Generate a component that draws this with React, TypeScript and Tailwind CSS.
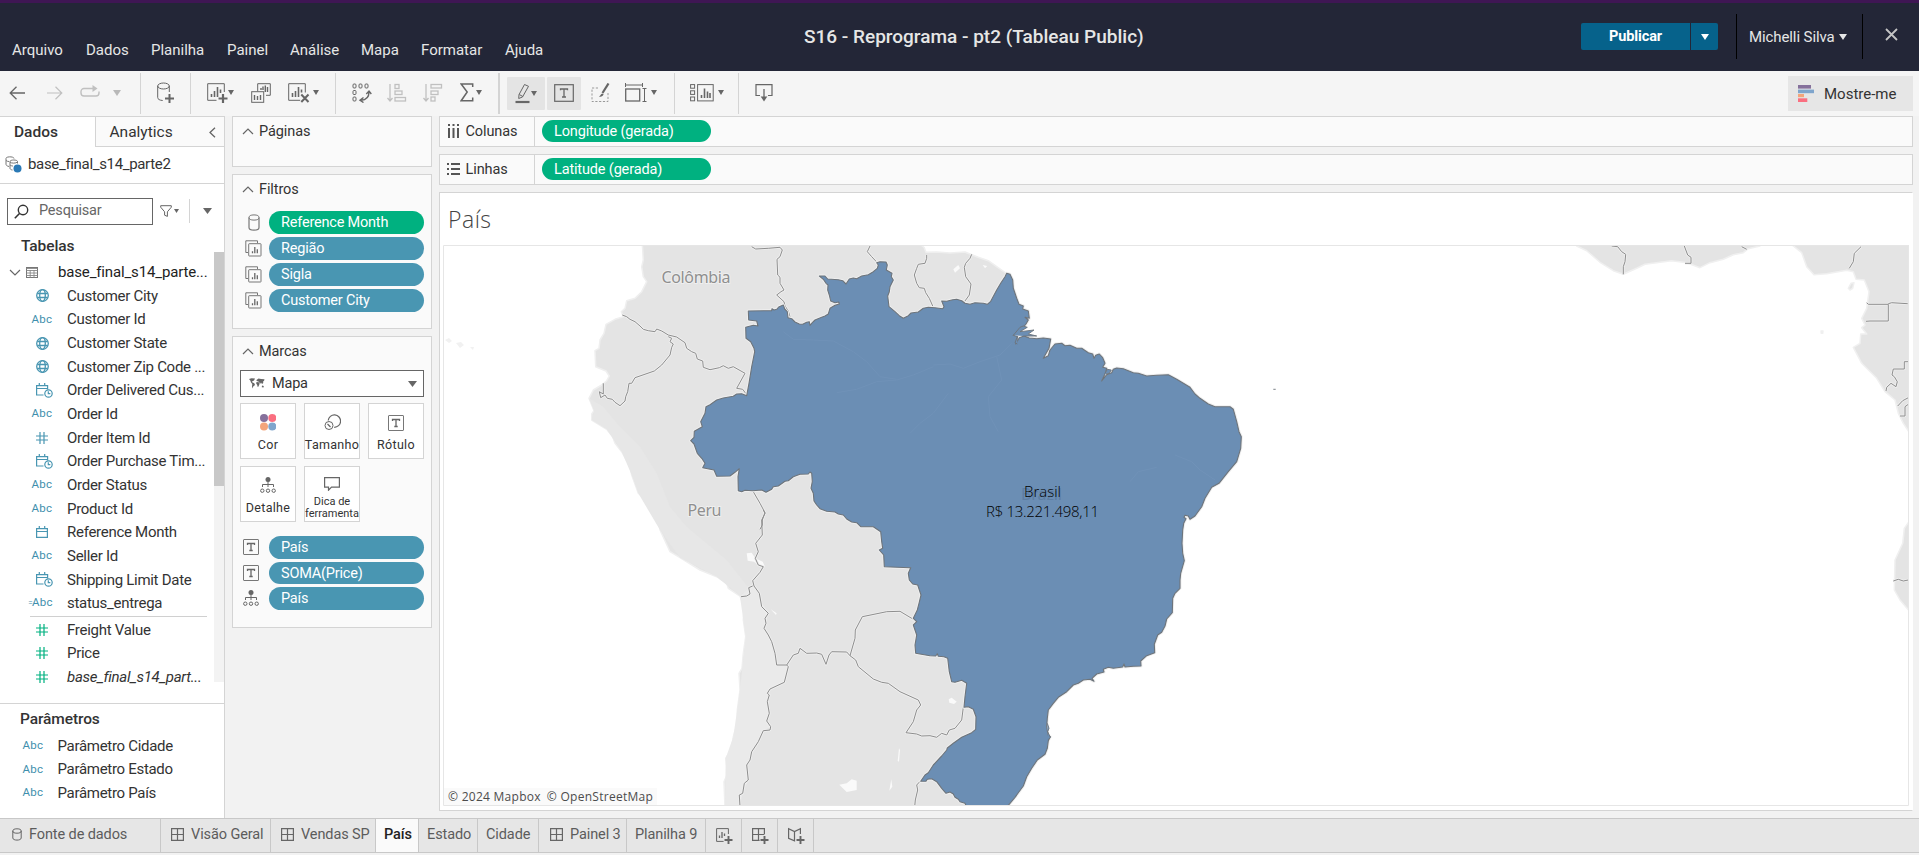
import React from "react";

type Points = number[];

/* ---------- small building blocks ---------- */

const Svg = ({ w, h, children, className = "" }: { w: number; h: number; children: React.ReactNode; className?: string }) => (
  <svg width={w} height={h} viewBox={`0 0 ${w} ${h}`} fill="none" stroke="#666" className={`shrink-0 ${className}`}>
    {children}
  </svg>
);

const Caret = ({ className = "", w = 6, h = 5, color = "#666" }: { className?: string; w?: number; h?: number; color?: string }) => (
  <svg width={w} height={h} viewBox="0 0 6 5" preserveAspectRatio="none" className={`shrink-0 ${className}`}>
    <path d="M0 0h6L3 5z" fill={color} />
  </svg>
);

const Sep = ({ className = "" }: { className?: string }) => <div className={`h-[41px] shrink-0 bg-[#d4d4d4] ${className}`} />;

const LabelIcon = ({ className = "" }: { className?: string }) => (
  <Svg w={16} h={16} className={className}>
    <rect x=".5" y=".5" width="15" height="15" rx=".5" stroke="#777" />
    <path d="M4.5 6V4.5h7V6M8 4.5v7M6.3 11.5h3.4" strokeWidth="1.3" />
  </Svg>
);

const DetailIcon = () => (
  <Svg w={16} h={17}>
    <circle cx="8" cy="2.5" r="2.5" fill="#666" stroke="none" />
    <path d="M8 4v6M2.5 10V7.5h11V10" />
    <circle cx="2.3" cy="13.7" r="1.7" />
    <circle cx="8" cy="13.7" r="1.7" />
    <circle cx="13.7" cy="13.7" r="1.7" />
  </Svg>
);

const ContextIcon = () => (
  <Svg w={17} h={17}>
    <path d="M3 12.5H.8V.8h11.7V3" stroke="#777" />
    <rect x="3.7" y="3.7" width="12.3" height="12.3" rx=".5" stroke="#777" />
    <path d="M7.5 13.3v-2M9.8 13.3V7M12.3 13.3V9.3" strokeWidth="1.3" />
  </Svg>
);

const Chevron = () => (
  <Svg w={12} h={7}>
    <path d="M1 6l5-5 5 5" strokeWidth="1.2" />
  </Svg>
);

/* ---------- header ---------- */

const menus: [string, string][] = [
  ["Arquivo", "w-[74px]"],
  ["Dados", "w-[65px]"],
  ["Planilha", "w-[76px]"],
  ["Painel", "w-[63px]"],
  ["Análise", "w-[71px]"],
  ["Mapa", "w-[60px]"],
  ["Formatar", "w-[84px]"],
  ["Ajuda", "w-[50px]"],
];

const Header = () => (
  <header className="flex h-[71px] border-t-[3px] border-[#3f1654] bg-[#232637] text-[#e6e6e6]">
    <nav className="flex w-[804px] shrink-0 pt-[37px] pl-[12px] text-[15px] leading-5">
      {menus.map(([m, w]) => (
        <span key={m} className={w}>{m}</span>
      ))}
    </nav>
    <h1 className="w-[777px] shrink-0 pt-[22px] text-[19px] leading-6 font-medium whitespace-nowrap">S16 - Reprograma - pt2 (Tableau Public)</h1>
    <div className="mt-[20px] flex h-[27px] w-[109px] items-center justify-center rounded-l-[2px] bg-[#06628b] pt-px text-[14.5px] font-bold tracking-[-0.1px] text-white">Publicar</div>
    <div className="mt-[20px] ml-px flex h-[27px] w-[27px] items-center justify-center rounded-r-[2px] bg-[#06628b]">
      <Caret w={8} h={6} color="#fff" />
    </div>
    <div className="mt-[11px] ml-[18px] h-[45px] w-px bg-black" />
    <div className="flex h-[68px] w-[125px] items-center pl-[12px] text-[15px] tracking-[-0.1px] whitespace-nowrap">
      Michelli Silva
      <Caret w={8} h={6} color="#e6e6e6" className="ml-1" />
    </div>
    <div className="mt-[11px] h-[45px] w-px bg-black" />
    <Svg w={13} h={13} className="mt-[25px] ml-[22px]">
      <path d="M1 1l11 11M12 1L1 12" stroke="#c4c4c4" strokeWidth="1.8" />
    </Svg>
  </header>
);

/* ---------- toolbar ---------- */

const Toolbar = () => (
  <div className="flex h-[45px] items-center bg-[#f5f5f5] [&>svg]:mb-[2px]">
    <Svg w={16} h={14} className="ml-[9px]">
      <path d="M1 7h15M7.5 .8L1.2 7l6.3 6.2" strokeWidth="1.3" />
    </Svg>
    <Svg w={16} h={14} className="ml-[22px]">
      <path d="M0 7h15M8.5 .8L14.8 7l-6.3 6.2" stroke="#c0c0c0" strokeWidth="1.2" />
    </Svg>
    <Svg w={20} h={16} className="ml-[17px] -mt-[2px]">
      <path d="M14 4.5H4a3 3 0 0 0-3 3V9a3 3 0 0 0 3 3h12a3 3 0 0 0 3-3V7.5" stroke="#c0c0c0" strokeWidth="1.4" />
      <path d="M12.5 1l5 3.5-5 3.5z" fill="#c0c0c0" stroke="none" />
    </Svg>
    <Caret w={8} h={6} color="#b8b8b8" className="ml-[13px]" />
    <Sep className="ml-[19px] w-px" />
    <Svg w={18} h={22} className="ml-[16px]">
      <ellipse cx="6.5" cy="4" rx="5.8" ry="3" />
      <path d="M.7 4v11.5c0 1.8 2 2.8 5 3M12.3 4v6" />
      <path d="M12.5 12v9M8 16.5h9" strokeWidth="2" />
    </Svg>
    <Sep className="ml-[15px] w-px" />
    <Svg w={21} h={22} className="ml-[16px]">
      <path d="M17.3 10V1.7H.7v16.6h8.8" />
      <path d="M4.5 15v-3M7.5 15V9M10.5 15V5M13.5 11V7.5" strokeWidth="1.6" />
      <path d="M16 12v9M11.5 16.5h9" strokeWidth="2.2" />
    </Svg>
    <Caret />
    <Svg w={20} h={22} className="ml-[17px]">
      <path d="M6.7 9.3V1.7h12.6v11.6H15" />
      <rect x=".7" y="9.7" width="12" height="10.6" />
      <path d="M10 8V6M12 8V4.5M14.3 10V3.5M16.5 10V5M3.5 18v-5M6.5 18v-4M9.5 18v-5" strokeWidth="1.4" />
    </Svg>
    <Svg w={22} h={22} className="ml-[17px]">
      <path d="M17.3 10.5V1.7H.7v16.6h11.5" />
      <path d="M4.5 15v-4M7.5 15V9M10.5 15V5M13.5 10.5V7.5" strokeWidth="1.6" />
      <path d="M13.3 12.5l7.2 7.5M20.5 12.5L13.3 20" strokeWidth="2" />
    </Svg>
    <Caret className="ml-[3px]" />
    <Sep className="ml-[16px] w-px" />
    <Svg w={20} h={20} className="ml-[16px]">
      <rect x="1" y="1" width="3" height="4" rx="1" />
      <rect x="7" y="1" width="3" height="4" rx="1" />
      <rect x="13" y="1" width="3" height="4" rx="1" />
      <rect x="1" y="7.5" width="3" height="4" rx="1" />
      <rect x="1" y="14" width="3" height="4" rx="1" />
      <path d="M17 9c0 5-3 8-8 8.3M14.3 11L17 8l2.3 3M11.5 14.5L8 17.3l3.5 2.2" strokeWidth="1.4" />
    </Svg>
    <Svg w={20} h={20} className="ml-[15px]">
      <g stroke="#c0c0c0" strokeWidth="1.3">
        <path d="M3 1v17M.5 15L3 18l2.5-3" />
        <rect x="8" y="1.5" width="4" height="4" />
        <rect x="8" y="8" width="7" height="3.5" />
        <rect x="8" y="14.5" width="10.5" height="3.5" />
      </g>
    </Svg>
    <Svg w={20} h={20} className="ml-[16px]">
      <g stroke="#c0c0c0" strokeWidth="1.3">
        <path d="M3 1v17M.5 15L3 18l2.5-3" />
        <rect x="8" y="1.5" width="10.5" height="3.5" />
        <rect x="8" y="8" width="7" height="3.5" />
        <rect x="8" y="14" width="4" height="4" />
      </g>
    </Svg>
    <Svg w={14} h={19} className="ml-[17px]">
      <path d="M12.7 4V1H1.2l6 8-6 8.7h11.5V14.5" strokeWidth="1.5" />
    </Svg>
    <Caret className="ml-[2px]" />
    <Sep className="ml-[16px] w-[2px]" />
    <div className="ml-[7px] flex h-[33px] w-[38px] items-center rounded-[1px] bg-[#e4e4e4] pl-[8px]">
      <Svg w={15} h={21}>
        <path d="M9.5 1.5l4 1.8L7.5 14 3.7 15.5 4 11.6zM4.3 11.5l3.5 2" />
        <path d="M.5 19h14" strokeWidth="2.2" />
      </Svg>
      <Caret className="ml-[1px]" />
    </div>
    <div className="ml-[2px] flex h-[33px] w-[34px] items-center justify-center rounded-[1px] bg-[#e4e4e4] pr-px pb-px">
      <Svg w={20} h={18}>
        <rect x=".7" y=".7" width="18.6" height="16.6" strokeWidth="1.2" />
        <path d="M6.5 6.3V5h7v1.3M10 5v8M8 13h4" strokeWidth="1.3" />
      </Svg>
    </div>
    <Svg w={20} h={20} className="ml-[10px]">
      <path d="M7 5H1v13.5h16V10" strokeDasharray="2.2 1.6" stroke="#999" />
      <path d="M17.5 .5l-6 9.5" strokeWidth="2.2" />
      <path d="M11.3 10.5c-1.5.5-1.5 2-3.3 3 2 .6 4-.2 4.6-2.2" fill="#666" stroke="none" />
    </Svg>
    <Svg w={22} h={22} className="ml-[14px]">
      <path d="M.5 3h17M.5 1v4M17.5 1v4" />
      <rect x=".7" y="7" width="14" height="12" strokeWidth="1.3" />
      <path d="M19.5 6.5v13M17.5 6.500h4M17.5 19.500h4" />
    </Svg>
    <Caret className="ml-[4px]" />
    <Sep className="ml-[17px] w-px" />
    <Svg w={24} h={18} className="ml-[15px]">
      <rect x=".6" y=".6" width="4" height="3.6" />
      <rect x=".6" y="6.8" width="4" height="3.6" />
      <rect x=".6" y="13" width="4" height="3.8" />
      <rect x="7.6" y=".6" width="15.6" height="16.3" />
      <path d="M11.5 14v-3M14.5 14V4.5M17.5 14V7.5M20 14V9" strokeWidth="1.6" />
    </Svg>
    <Caret className="ml-[4px]" />
    <Sep className="ml-[14px] w-px" />
    <Svg w={18} h={18} className="ml-[16px]">
      <path d="M5 11.5H1V.7h16v10.8h-4" strokeWidth="1.2" />
      <path d="M9 5v9" strokeWidth="1.3" />
      <path d="M5.7 12.5h6.6L9 17.5z" fill="#666" stroke="none" />
    </Svg>
    <div className="mr-[6px] ml-auto flex h-[35px] w-[125px] items-center bg-[#e6e6e6] pl-[10px] text-[15px] text-[#333]">
      <svg width="16" height="17" viewBox="0 0 16 17" className="mr-[10px]">
        <path d="M0 0h13v3.6H0z" fill="#85709b" />
        <path d="M0 4.6h16v3.6H0z" fill="#7fa5cc" />
        <path d="M0 9h6v3.2H0z" fill="#f4a57b" />
        <path d="M0 13.3h9.3V17H0z" fill="#fa6f80" />
      </svg>
      <span className="pt-px">Mostre-me</span>
    </div>
  </div>
);

/* ---------- data pane ---------- */

const BLUE = "#4996b2";

const TypeIcon = ({ t }: { t: string }) => {
  if (t === "abc" || t === "=abc")
    return (
      <span className="flex items-center text-[11.5px] leading-none tracking-[0.3px] text-[#3f8fad]">
        {t === "=abc" && <span className="-mr-px -ml-[3px] text-[8px]">=</span>}Abc
      </span>
    );
  if (t === "geo")
    return (
      <Svg w={13} h={13}>
        <g stroke={BLUE} strokeWidth="1.3">
          <circle cx="6.5" cy="6.5" r="5.8" />
          <ellipse cx="6.5" cy="6.5" rx="2.8" ry="5.8" />
          <path d="M1.3 4.5h10.4M1.3 8.5h10.4" />
        </g>
      </Svg>
    );
  if (t === "num" || t === "meas")
    return (
      <Svg w={12} h={12}>
        <path d="M4 0v12M8 0v12M0 4h12M0 8h12" stroke={t === "num" ? BLUE : "#00b180"} strokeWidth="1.2" />
      </Svg>
    );
  if (t === "date")
    return (
      <Svg w={12} h={12}>
        <path d="M.6 2.6h10.8v8.8H.6zM.6 5.5h10.8M3.3 0v3M8.7 0v3" stroke={BLUE} strokeWidth="1.2" />
      </Svg>
    );
  return (
    <Svg w={17} h={15} className="ml-[4px]">
      <g stroke={BLUE} strokeWidth="1.2">
        <path d="M7.5 12H.6V2.6h11v4M.6 5.5h11M3.3 0v3M8.7 0v3" />
        <circle cx="12.5" cy="10.5" r="3.7" />
        <path d="M12.3 8.3v2.4h2" />
      </g>
    </Svg>
  );
};

const Field = ({ t, name, italic }: { t: string; name: string; italic?: boolean }) => (
  <div className="flex h-[23.65px] items-center">
    <div className="flex w-[32px] items-center justify-center">
      <TypeIcon t={t} />
    </div>
    <span className={`ml-[9px] text-[15px] leading-[20px] tracking-[-0.28px] whitespace-nowrap ${italic ? "italic" : ""}`}>{name}</span>
  </div>
);

const dims: [string, string][] = [
  ["geo", "Customer City"],
  ["abc", "Customer Id"],
  ["geo", "Customer State"],
  ["geo", "Customer Zip Code ..."],
  ["dt", "Order Delivered Cus..."],
  ["abc", "Order Id"],
  ["num", "Order Item Id"],
  ["dt", "Order Purchase Tim..."],
  ["abc", "Order Status"],
  ["abc", "Product Id"],
  ["date", "Reference Month"],
  ["abc", "Seller Id"],
  ["dt", "Shipping Limit Date"],
  ["=abc", "status_entrega"],
];

const DataPane = () => (
  <aside className="flex w-[225px] shrink-0 flex-col border-r border-[#d4d4d4] bg-white">
    <div className="flex h-[31px] border-t border-[#d4d4d4] text-[15.5px]">
      <div className="w-[95px] shrink-0 pt-[5px] pl-[14px] leading-5 font-medium">Dados</div>
      <div className="flex flex-1 border-b border-l border-[#d4d4d4] bg-[#fafafa] pt-[5px] pl-[13.5px] leading-5">
        <span>Analytics</span>
        <Svg w={7} h={11} className="mt-[5px] mr-[8px] ml-auto">
          <path d="M6 .7L1 5.5l5 4.8" strokeWidth="1.3" />
        </Svg>
      </div>
    </div>
    <div className="flex h-[37px] shrink-0 items-center border-b border-[#d4d4d4] pb-[2px] pl-[5px] text-[15px] tracking-[-0.33px]">
      <Svg w={17} h={17}>
        <path d="M4 10.5C1.5 10 1 9 1 8V2.5C1 1 4 .7 6 .9s3 .8 3 1.6M1 4.5c1 .8 2 1 3 1" stroke="#777" />
        <path d="M5 12.5V5.5c0-2 7.5-2 7.5 0v2M5 6c1 1.5 6 1.5 7.5 0M5 9c.5.6 2 1 3 1M5 12.5c.5 1 1.5 1.4 2.5 1.5" stroke="#777" />
        <circle cx="12.5" cy="12.5" r="4" fill="#2a79b5" stroke="none" />
      </Svg>
      <span className="ml-[6px]">base_final_s14_parte2</span>
    </div>
    <div className="flex h-[53px] shrink-0 items-center pt-px pl-[7px]">
      <div className="flex h-[27px] w-[146px] items-center border border-[#666] pl-[6px] text-[14.5px] tracking-[-0.2px] text-[#666]">
        <Svg w={15} h={15}>
          <circle cx="9" cy="6" r="4.7" stroke="#333" strokeWidth="1.4" />
          <path d="M5.5 9.5L.8 14.2" stroke="#333" strokeWidth="1.6" />
        </Svg>
        <span className="ml-[10px]">Pesquisar</span>
      </div>
      <Svg w={12} h={13} className="ml-[7px]">
        <path d="M.7.7h10.6v1.5L7.4 6.8v4.6l-2.8-1.2V6.8L.7 2.2z" />
      </Svg>
      <Caret className="ml-[2px]" w={5} h={4} />
      <div className="ml-[10px] h-[24px] w-px bg-[#d4d4d4]" />
      <Caret className="ml-[13px]" w={9} h={6} />
    </div>
    <div className="flex h-[467px] shrink-0">
      <div className="w-[214px] overflow-hidden">
        <div className="h-[24px] pl-[21px] text-[15.5px] leading-[18px] font-medium tracking-[-0.1px]">Tabelas</div>
        <div className="flex h-[23px] items-center pl-[9px] text-[15px] tracking-[-0.15px] text-[#222]">
          <Svg w={12} h={7}>
            <path d="M1 1l5 5 5-5" strokeWidth="1.2" />
          </Svg>
          <Svg w={12} h={11} className="ml-[5px]">
            <rect x=".5" y=".5" width="11" height="10" stroke="#777" />
            <path d="M.5 1.5h11M.5 3.5h11M.5 6h11M.5 8.5h11M4.2 3v8M8 3v8" stroke="#888" strokeWidth=".9" />
          </Svg>
          <span className="ml-[20px]">base_final_s14_parte...</span>
        </div>
        <div className="pl-[26px]">
          {dims.map(([t, n]) => (
            <Field key={n} t={t} name={n} />
          ))}
        </div>
        <div className="mt-[1px] mb-[1px] ml-[30px] h-px w-[177px] bg-[#d0d0d0]" />
        <div className="pl-[26px]">
          <Field t="meas" name="Freight Value" />
          <Field t="meas" name="Price" />
          <Field t="meas" name="base_final_s14_part..." italic />
        </div>
      </div>
      <div className="mt-[15px] h-[430px] w-[10px] bg-[#f3f3f3]">
        <div className="h-[234px] bg-[#c8c8c8]" />
      </div>
    </div>
    <div className="-mt-px flex-1 border-t border-[#d4d4d4] pt-[5px]">
      <div className="mb-[5px] pl-[20px] text-[15.5px] leading-[20px] font-medium tracking-[-0.1px]">Parâmetros</div>
      {["Parâmetro Cidade", "Parâmetro Estado", "Parâmetro País"].map((p) => (
        <div key={p} className="flex h-[23.6px] items-center pl-[17px]">
          <div className="flex w-[32px] justify-center">
            <TypeIcon t="abc" />
          </div>
          <span className="ml-[8.5px] text-[15px] tracking-[-0.3px]">{p}</span>
        </div>
      ))}
    </div>
  </aside>
);

/* ---------- cards ---------- */

const Pill = ({ icon, text, green }: { icon: React.ReactNode; text: string; green?: boolean }) => (
  <div className="flex items-center">
    <div className="flex w-[28px] justify-center pr-[4px]">{icon}</div>
    <div className={`h-[22.5px] w-[155px] rounded-full pl-[12px] text-[14.5px] leading-[24px] tracking-[-0.2px] text-white ${green ? "bg-[#00b180]" : "bg-[#4996b2]"}`}>{text}</div>
  </div>
);

const CardTitle = ({ children }: { children: React.ReactNode }) => (
  <div className="flex h-[29px] items-center pl-[9px] text-[14.5px] tracking-[-0.1px]">
    <Chevron />
    <span className="ml-[5px]">{children}</span>
  </div>
);

const MarkButton = ({ icon, label }: { icon: React.ReactNode; label: string }) => (
  <div className="flex h-[56px] w-[56px] flex-col items-center border border-[#d4d4d4] bg-white">
    <div className="flex h-[33px] items-end pb-[6px]">{icon}</div>
    <span className="text-[12.5px] leading-[15px] tracking-[0.3px] whitespace-nowrap">{label}</span>
  </div>
);

const Cards = () => (
  <section className="ml-[7px] flex w-[200px] shrink-0 flex-col gap-[7px]">
    <div className="h-[51px] border border-[#d4d4d4] bg-[#fafafa]">
      <CardTitle>Páginas</CardTitle>
    </div>
    <div className="h-[155px] border border-[#d4d4d4] bg-[#fafafa]">
      <CardTitle>Filtros</CardTitle>
      <div className="mt-[7px] flex flex-col gap-[3.5px] pl-[8px]">
        <Pill
          green
          text="Reference Month"
          icon={
            <Svg w={12} h={17} className="ml-px">
              <ellipse cx="6" cy="3.5" rx="5" ry="2.6" stroke="#777" />
              <path d="M1 3.5v10c0 3.5 10 3.5 10 0v-10" stroke="#777" strokeWidth="1.2" />
            </Svg>
          }
        />
        <Pill text="Região" icon={<ContextIcon />} />
        <Pill text="Sigla" icon={<ContextIcon />} />
        <Pill text="Customer City" icon={<ContextIcon />} />
      </div>
    </div>
    <div className="h-[292px] border border-[#d4d4d4] bg-[#fafafa]">
      <CardTitle>Marcas</CardTitle>
      <div className="mt-[4px] ml-[7px] flex h-[27px] w-[184px] items-center border border-[#666] bg-white pl-[8px] text-[14.5px] tracking-[-0.2px]">
        <svg width="16" height="11" viewBox="0 0 16 11" fill="#666">
          <path d="M0 1l2.5-.8L6 .5 5 2.5 3.5 3.3l-.7.8 2.5 1.2L6 7l-1.8 1.5L3.7 10.500 3 8.500 3.300 6 2 4.500 1.300 2.500zM7.500 2l2-1.500L12 1l3.500.300L15 3l-1 .500.300 1.500L13 6l-1-1.500L11 6 10.300 4.500 9.500 3.500 7.700 3zM7.500 4l2.300.300.700 1.700-1 2.500-.800.500-.500-2-1-1.500zM13 7.500l1.800.500-.300 1.500-1.700-.300z" />
        </svg>
        <span className="ml-[7px]">Mapa</span>
        <Caret w={9} h={6} className="mr-[6px] ml-auto" />
      </div>
      <div className="mt-[6px] ml-[7px] grid w-[184px] grid-cols-3 gap-x-[8px] gap-y-[7px]">
        <MarkButton
          label="Cor"
          icon={
            <svg width="16" height="17" viewBox="0 0 16 17">
              <circle cx="4" cy="4" r="4" fill="#85709b" />
              <circle cx="12.300" cy="4" r="4" fill="#fa6f80" />
              <circle cx="4" cy="12.500" r="4" fill="#f4a57b" />
              <circle cx="12.300" cy="12.500" r="4" fill="#7fa5cc" />
            </svg>
          }
        />
        <MarkButton
          label="Tamanho"
          icon={
            <Svg w={17} h={17}>
              <path d="M4.200 6.500a6.200 6.200 0 1 1 6 6.800" strokeWidth="1.200" />
              <circle cx="5" cy="11.500" r="4" />
              <path d="M3.500 10l3 3" strokeWidth="1.200" />
            </Svg>
          }
        />
        <MarkButton label="Rótulo" icon={<LabelIcon />} />
        <MarkButton label="Detalhe" icon={<DetailIcon />} />
        <div className="flex h-[56px] w-[56px] flex-col items-center border border-[#d4d4d4] bg-white pt-[10px] text-center text-[11px] leading-[12px]">
          <Svg w={16} h={14} className="mb-[5px]">
            <path d="M.6.600h14.800v9.600H7.500L4.500 13.200V10.200H.6z" strokeWidth="1.200" />
          </Svg>
          <span>Dica de ferramenta</span>
        </div>
      </div>
      <div className="mt-[14px] flex flex-col gap-[3px] pl-[8px]">
        <Pill text="País" icon={<LabelIcon className="-ml-[4px]" />} />
        <Pill text="SOMA(Price)" icon={<LabelIcon className="-ml-[4px]" />} />
        <Pill text="País" icon={<div className="-ml-[4px]"><DetailIcon /></div>} />
      </div>
    </div>
  </section>
);

/* ---------- map ---------- */

/* Outline points are stored in thirds of a pixel relative to an origin. */
const at = (ox: number, oy: number, p: Points) => {
  const out: string[] = [];
  for (let i = 0; i < p.length; i += 2) out.push(`${(ox + p[i] / 3).toFixed(1)} ${(oy + p[i + 1] / 3).toFixed(1)}`);
  return out.join("L");
};
const NW = (...p: Points) => at(560, 240, p);
const NE = (...p: Points) => at(900, 240, p);
const SW = (...p: Points) => at(680, 510, p);
const SE = (...p: Points) => at(900, 510, p);
const AF = (...p: Points) => at(1560, 230, p);
const join = (...s: string[]) => "M" + s.join("L");

const brazil =
  join(
    NW(565, 213, 635, 212, 636, 206, 642, 210, 650, 208, 656, 201, 670, 195, 674, 207, 682, 215, 684, 233, 695, 236, 705, 246, 718, 252, 728, 253, 740, 247, 748, 245, 750, 256, 757, 248, 765, 240, 785, 232, 795, 228, 805, 222, 810, 205, 825, 196, 838, 192, 836, 186, 825, 188, 812, 183, 808, 165, 803, 150, 804, 135, 798, 130, 790, 118, 778, 108, 795, 108, 803, 117, 835, 119, 848, 122, 858, 132, 868, 117, 880, 114, 890, 116, 905, 108, 925, 104, 940, 95, 952, 85, 955, 75, 950, 68, 960, 65, 978, 66, 982, 75, 979, 90, 996, 100, 994, 110, 1000, 120, 990, 140, 988, 155, 983, 168, 987, 200, 1005, 215, 1018, 227, 1030, 235, 1045, 227, 1053, 219, 1075, 216, 1090, 205, 1105, 202),
    NE(105, 203, 128, 206, 132, 200, 125, 183, 140, 184, 158, 179, 170, 178, 185, 182, 195, 190, 210, 193, 225, 188, 250, 190, 262, 193, 272, 184, 290, 150, 303, 128, 315, 110, 320, 100, 330, 103, 338, 120, 340, 145, 350, 175, 357, 193, 370, 198, 368, 207, 385, 213, 388, 235, 375, 232, 385, 240, 378, 252, 365, 268, 355, 280, 340, 286, 353, 290, 347, 312, 358, 293, 372, 288, 388, 294, 410, 296, 430, 294, 452, 297, 447, 325, 430, 355, 445, 347, 450, 330, 465, 312, 485, 310, 495, 317, 510, 316, 530, 325, 545, 325, 565, 338, 578, 342, 582, 355, 587, 346, 598, 342, 608, 353, 615, 370, 608, 382, 620, 385, 616, 400, 605, 423, 620, 404, 635, 398, 640, 388, 650, 384, 670, 386, 700, 398, 715, 400, 740, 408, 770, 406, 805, 404, 830, 418, 870, 442, 885, 462, 900, 475, 925, 492, 945, 500, 990, 500, 1000, 508, 1010, 545, 1017, 575, 1024, 590, 1022, 625, 1010, 665, 985, 695, 957, 730, 935, 742, 915, 775, 905, 800, 885, 828, 870, 838, 865, 828, 855, 826, 852, 832, 858, 836),
    SE(851, 40, 848, 60, 846, 100, 848, 130, 853, 152, 842, 190, 840, 210, 840, 235, 825, 250, 818, 265, 817, 308, 800, 327, 795, 348, 785, 367, 773, 375, 763, 403, 764, 428, 740, 437, 722, 453, 723, 468, 700, 469, 675, 471, 672, 462, 668, 471, 640, 475, 625, 472, 610, 478, 612, 486, 590, 492, 576, 505, 582, 514, 570, 508, 550, 510, 535, 520, 520, 525, 500, 545, 475, 562, 460, 580, 445, 600, 442, 625, 440, 650, 444, 675, 451, 680, 445, 692, 442, 715, 435, 733, 412, 750, 395, 775, 380, 800, 370, 828, 345, 862, 320, 892, 200, 892, 195, 880, 180, 875, 175, 868, 165, 862, 160, 852, 150, 846, 138, 850, 125, 835, 110, 815, 95, 806, 82, 808, 78, 814, 62, 814, 75, 795, 85, 788, 100, 765, 125, 738, 140, 720, 142, 714, 160, 700, 185, 682, 215, 668, 227, 658, 228, 620, 220, 598, 205, 590, 192, 592, 195, 560, 200, 520, 185, 511, 165, 517, 155, 515, 148, 485, 143, 445, 132, 440, 115, 439, 112, 431, 107, 438, 90, 437, 47, 430, 45, 405, 50, 375, 40, 345, 50, 335, 40, 325, 52, 300, 57, 280, 63, 255, 53, 225, 38, 222, 28, 210, 25, 190, 32, 173),
    SW(690, 173, 613, 170, 611, 135, 598, 120, 608, 115, 605, 95, 602, 65, 580, 50, 542, 50, 530, 38, 515, 36, 500, 27, 490, 15, 475, 12, 465, 6, 440, 4, 430, 0),
    NW(790, 810, 780, 806, 770, 795, 762, 783, 760, 760, 753, 745, 757, 725, 755, 700, 750, 696, 745, 702, 720, 703, 700, 710, 685, 722, 675, 724, 655, 738, 640, 740, 635, 748, 618, 757, 605, 750, 578, 752, 555, 751, 545, 755, 535, 752, 534, 710, 538, 686, 525, 697, 510, 708, 470, 709, 462, 690, 428, 683, 435, 670, 425, 655, 412, 640, 402, 612, 392, 602, 402, 592, 403, 574, 427, 560, 422, 545, 435, 520, 438, 500, 450, 494, 470, 480, 490, 474, 520, 469, 530, 462, 545, 461, 560, 467, 567, 430, 575, 380, 584, 335, 582, 325, 572, 305, 558, 295, 557, 262, 580, 256, 594, 258, 590, 243, 566, 240),
  ) + "Z";

const southAmerica =
  join(
    NW(247, 12, 250, 60, 245, 80, 250, 110, 260, 125, 245, 155, 225, 175, 200, 182, 195, 205, 184, 215, 190, 230, 165, 238, 138, 253, 132, 280, 120, 300, 117, 325, 105, 332, 107, 380, 138, 393, 148, 408, 140, 422, 125, 435, 100, 450, 87, 475, 102, 512, 95, 522, 95, 540, 140, 568, 158, 590, 165, 610, 185, 635, 210, 680, 215, 705, 235, 760, 255, 778, 275, 815, 297, 850, 300, 870),
    SW(-30, 125, 0, 143, 60, 180, 110, 200, 140, 220, 145, 235, 180, 258, 192, 290, 190, 330, 197, 380, 190, 430, 186, 475, 177, 490, 180, 540, 172, 600, 172, 640, 160, 680, 155, 715, 137, 745, 143, 790, 132, 815, 135, 895, 870, 895),
    at(0, 0, [3030, 2100]),
    NE(322, 102, 290, 80, 265, 62, 235, 52, 210, 42, 195, 36, 150, 39, 110, 36, 78, 37, 72, 22, 60, 12),
  ) + "Z";

const peruCoast =
  join(
    NW(87, 475, 102, 512, 95, 540, 140, 568, 185, 635, 215, 705, 235, 760, 300, 870),
    SW(0, 143, 110, 200, 180, 258, 206, 233, 140, 150, 20, 50),
    NW(330, 800, 290, 700, 240, 620, 180, 560, 130, 500),
  ) + "Z";

const chile =
  join(
    SW(180, 260, 197, 380, 180, 540, 160, 680, 137, 745, 135, 895, 180, 886, 188, 850, 205, 810, 200, 765, 215, 725, 250, 662, 272, 650, 260, 633, 268, 600, 262, 550, 270, 537, 313, 517, 325, 470, 290, 465, 265, 375, 252, 355, 265, 310, 240, 270, 222, 228, 206, 233),
  ) + "Z";

const borders = [
  NW(575, 20, 587, 27, 625, 25, 660, 22, 667, 30, 660, 50, 651, 58, 653, 105, 660, 112, 660, 130, 672, 150, 663, 155, 650, 165, 672, 185, 675, 198, 685, 213, 690, 230),
  NW(930, 18, 922, 35, 935, 50, 952, 68),
  NE(80, 45, 80, 55, 75, 70, 55, 73, 50, 85, 43, 105, 50, 130, 58, 143, 73, 145, 77, 158, 88, 175, 100, 202),
  NE(215, 43, 210, 55, 197, 70, 193, 82, 197, 110, 213, 132, 208, 165, 192, 187),
  NW(187, 225, 200, 230, 210, 238, 225, 245, 240, 258, 250, 268, 265, 272, 285, 275, 290, 267, 305, 273, 325, 285, 350, 291, 360, 298, 375, 308, 380, 325, 395, 335, 407, 340, 412, 357, 428, 363, 430, 382, 450, 389, 478, 383, 490, 377, 505, 385, 520, 380, 555, 400, 530, 445, 548, 448, 560, 464),
  NW(325, 290, 335, 295, 330, 305, 340, 312, 335, 322, 330, 345, 305, 375, 283, 393, 225, 413, 215, 430, 207, 430, 203, 455, 197, 470, 195, 483, 180, 497, 165, 487, 157, 478, 142, 475, 135, 465, 122, 473, 118, 455, 130, 462, 130, 430),
  NW(578, 752, 600, 790, 615, 818, 607, 840, 607, 855, 600, 868),
  SW(250, 0, 255, 10, 245, 30, 247, 75, 227, 100, 235, 125, 226, 145, 235, 165, 250, 170, 240, 187, 218, 212, 222, 228, 238, 250, 245, 290, 265, 310, 255, 325, 258, 340, 252, 355, 265, 375, 275, 395, 285, 430, 290, 465, 320, 465, 340, 435, 355, 430, 360, 415, 380, 430, 410, 429, 425, 433, 438, 463, 447, 435, 455, 425, 500, 426, 510, 437, 525, 385, 526, 360, 547, 320, 620, 305, 660, 304, 700, 328),
  SW(218, 228, 206, 233, 210, 252, 200, 258, 183, 260),
  SW(510, 437, 527, 450, 535, 470, 580, 507, 605, 517, 625, 520, 660, 545, 715, 570, 722, 585, 710, 600, 700, 635, 678, 668, 710, 672, 725, 678, 750, 677, 770, 682, 785, 670, 800, 675, 808, 660, 825, 655, 845, 630, 850, 592),
  SW(320, 465, 325, 470, 313, 517, 270, 537, 262, 550, 268, 555, 262, 575, 268, 610, 260, 633, 272, 650, 270, 660, 250, 662, 235, 695, 215, 725, 210, 750, 200, 765, 205, 810, 193, 820, 188, 850, 178, 855, 180, 890),
  SW(722, 812, 710, 825, 713, 840, 706, 870, 704, 890),
  AF(155, 48, 173, 50, 185, 65, 197, 73, 195, 95, 190, 110, 190, 133),
  AF(373, 48, 383, 75, 393, 82, 393, 100, 375, 100),
  AF(545, 50, 560, 58),
  AF(903, 50, 883, 70, 880, 95, 868, 115),
  AF(920, 218, 925, 223, 985, 223, 985, 273, 930, 273, 918, 274),
  AF(985, 221, 995, 218, 1043, 221),
  AF(1045, 395, 1033, 395, 1033, 417, 1000, 417, 996, 435, 1003, 440, 1012, 455, 1008, 470, 993, 460, 980, 472, 978, 483),
  AF(1045, 503, 1028, 512, 1013, 528),
  AF(1045, 523, 1035, 530, 1035, 558, 1020, 558),
  AF(1000, 1053, 1015, 1048, 1030, 1053, 1045, 1050),
]
  .map((s) => "M" + s)
  .join("");

const africa =
  [
    AF(45, 40, 50, 48, 80, 62, 120, 97, 160, 122, 190, 133, 230, 115, 255, 103, 335, 92, 380, 98, 420, 113, 450, 98, 490, 88, 520, 74, 550, 68, 565, 56, 600, 48, 600, 40),
    AF(690, 40, 725, 68, 740, 110, 762, 134, 800, 131, 860, 121, 880, 125, 888, 148, 913, 150, 927, 185, 920, 235, 905, 265, 915, 285, 905, 293, 920, 312, 902, 312, 900, 340, 880, 352, 905, 400, 950, 445, 975, 485, 1005, 510, 1015, 550, 1030, 580, 1050, 610, 1050, 40),
    AF(1050, 870, 1033, 895, 1028, 940, 1005, 990, 1003, 1080, 1020, 1110, 1050, 1145),
    AF(865, 175, 873, 160, 882, 158, 878, 175, 870, 180),
    AF(783, 303, 789, 303, 788, 310, 784, 310),
  ]
    .map((s) => "M" + s + "Z")
    .join("");

const lakes =
  [
    SW(200, 130, 215, 128, 226, 145, 248, 155, 255, 170, 235, 165, 222, 155, 203, 152),
    SW(478, 824, 500, 820, 515, 808, 530, 812, 530, 840, 500, 846),
    SW(806, 568, 815, 563, 830, 575, 822, 582, 808, 578),
    SW(272, 298, 290, 310, 288, 315),
    SW(657, 715, 660, 720, 657, 755, 653, 753),
    SW(634, 808, 637, 830, 628, 842),
    NE(160, 88, 175, 75, 180, 85, 165, 98),
    NE(248, 75, 262, 78, 255, 85),
  ]
    .map((s) => "M" + s + "Z")
    .join("");

const rivers = [
  NW(670, 275, 700, 298, 760, 300, 820, 303, 880, 335, 920, 365, 960, 410, 1010, 418),
  NW(830, 458, 890, 448, 950, 425, 1010, 420, 1060, 405, 1120, 380),
  NE(100, 375, 150, 372, 190, 385, 240, 365, 300, 345, 335, 310),
  NE(145, 460, 100, 520, 60, 550, 30, 580),
  NE(290, 350, 305, 420, 265, 470, 270, 530, 295, 575),
  NE(825, 645, 875, 665, 900, 690, 945, 720),
  NE(690, 725, 715, 695, 770, 682),
]
  .map((s) => "M" + s)
  .join("");

const coastDetail = [
  NE(340, 286, 360, 262, 370, 258, 382, 262, 360, 275, 402, 270, 385, 282, 410, 288, 370, 288),
  NE(352, 290, 345, 308, 352, 312),
  NE(615, 400, 622, 388, 634, 390, 628, 400, 618, 402),
  SE(442, 640, 447, 655, 443, 665, 451, 682, 444, 690),
  NE(1120, 448, 1127, 448),
]
  .map((s) => "M" + s)
  .join("");

const MapView = () => (
  <div className="relative h-[561px] w-[1466px]">
    <svg width="1466" height="561" viewBox="443 245 1466 561" className="block bg-white">
      <g strokeLinejoin="round">
        <path d={southAmerica} fill="#e4e4e4" stroke="#efefef" strokeWidth="1.5" />
        <path d={peruCoast} fill="#e7e7e7" />
        <path d={chile} fill="#eaeaea" />
        <path d={africa} fill="#e4e4e4" stroke="#f0f0f0" strokeWidth="1.5" />
        <path d={lakes} fill="#fafafa" />
        <path d={borders} fill="none" stroke="#efefef" strokeWidth="2.6" />
        <path d={borders} fill="none" stroke="#8e8e8e" strokeWidth="1" />
        <path d={brazil} fill="#6b8eb4" stroke="#efefef" strokeWidth="3" />
        <path d={brazil} fill="#6b8eb4" stroke="#6d747b" strokeWidth="1.1" />
        <path d={rivers} fill="none" stroke="#7092b8" strokeWidth="1" />
        <path d={coastDetail} fill="#6b8eb4" stroke="#6d747b" strokeWidth=".9" />
        <path d="M445 340l4-2 3 3-3 2zM456 343l5-1 3 3-4 3zM470 347l4 0-1 3z" fill="#f1f1f1" />
      </g>
      <g fontFamily="'Noto Sans','Open Sans',sans-serif" fill="#8f8f8f" stroke="#efefef" strokeWidth="2" paintOrder="stroke">
        <text x="661.5" y="283" fontSize="16" textLength="69">Colômbia</text>
        <text x="687.5" y="515.5" fontSize="16" textLength="34">Peru</text>
      </g>
      <text x="1021" y="500" fontSize="16" textLength="41" fontFamily="'Noto Sans','Open Sans',sans-serif" fill="#5d7da3">Brazil</text>
      <g fontFamily="'Open Sans','Noto Sans',sans-serif" fontWeight="300" fill="#000">
        <text x="1024" y="496.5" fontSize="15" textLength="37">Brasil</text>
        <text x="986" y="516.5" fontSize="15" textLength="113">R$ 13.221.498,11</text>
      </g>
      <path d="M443.500 805.500V245.500H1908.500V805.500z" fill="none" stroke="#e6e6e6" />
    </svg>
    <div className="absolute bottom-px left-px flex h-[17px] items-center gap-[6px] bg-[#fafafa] px-[4px] font-['Open_Sans','Noto_Sans',sans-serif] text-[12px] tracking-[0.27px] text-[#4c4c4c]">
      <span>© 2024 Mapbox</span>
      <span>© OpenStreetMap</span>
    </div>
  </div>
);

const Shelf = ({ label, pill, icon }: { label: string; pill: string; icon: React.ReactNode }) => (
  <div className="flex h-[31px] border border-[#d4d4d4] bg-[#fafafa]">
    <div className="flex w-[95px] items-center border-r border-[#d4d4d4] pl-[7px] text-[14.5px] tracking-[-0.1px]">
      {icon}
      <span className="ml-[5.5px]">{label}</span>
    </div>
    <div className="mt-[3px] ml-[7px] h-[22px] w-[169px] rounded-full bg-[#00b180] pl-[12px] text-[14.5px] leading-[24px] tracking-[-0.15px] text-white">{pill}</div>
  </div>
);

const Sheet = () => (
  <main className="ml-[7px] flex w-[1474px] shrink-0 flex-col">
    <Shelf
      label="Colunas"
      pill="Longitude (gerada)"
      icon={
        <svg width="13" height="14" viewBox="0 0 13 14" fill="#555" className="mb-[2px]">
          <path d="M1 0h2v2H1zM5.500 0h2v2h-2zM10 0h2v2h-2zM1 4h2v10H1zM5.500 4h2v10h-2zM10 4h2v10h-2z" />
        </svg>
      }
    />
    <div className="h-[7px]" />
    <Shelf
      label="Linhas"
      pill="Latitude (gerada)"
      icon={
        <svg width="13" height="12" viewBox="0 0 13 12" fill="#555" className="mb-[2px]">
          <path d="M0 0h2v2H0zM0 5h2v2H0zM0 10h2v2H0zM4 0h9v2H4zM4 5h9v2H4zM4 10h9v2H4z" />
        </svg>
      }
    />
    <div className="mt-[7px] h-[619px] border border-[#d4d4d4] border-r-transparent bg-white pl-[3px]">
      <div className="flex h-[52px] items-center pl-[5px] font-['Open_Sans','Noto_Sans',sans-serif] text-[23px] font-light tracking-[0.5px] text-[#444]">País</div>
      <MapView />
    </div>
  </main>
);

/* ---------- sheet tabs ---------- */

const GridIcon = () => (
  <Svg w={13} h={13}>
    <path d="M.6.600h11.800v11.800H.6zM6.500.600v11.800M.6 6.500h11.800" strokeWidth="1.200" />
  </Svg>
);

const Tab = ({ w, text, icon, pad, active }: { w: string; text: string; icon?: React.ReactNode; pad: string; active?: boolean }) => (
  <div className={`flex shrink-0 items-center gap-[7px] border-r border-[#c8c8c8] pb-[2px] whitespace-nowrap ${w} ${pad} ${active ? "bg-[#fafafa] font-medium text-[#222]" : ""}`}>
    {icon}
    <span>{text}</span>
  </div>
);

const Tabs = () => (
  <footer className="flex h-[35px] shrink-0 border-y border-[#c8c8c8] bg-[#e6e6e6] text-[14.5px] tracking-[-0.1px] text-[#5c5c5c]">
    <Tab
      w="w-[161px]"
      pad="pl-[12px]"
      text="Fonte de dados"
      icon={
        <Svg w={10} h={13}>
          <ellipse cx="5" cy="3" rx="4.200" ry="2.200" />
          <path d="M.8 3v7c0 2.800 8.400 2.800 8.400 0V3" />
        </Svg>
      }
    />
    <Tab w="w-[110px]" pad="pl-[10px]" text="Visão Geral" icon={<GridIcon />} />
    <Tab w="w-[105px]" pad="pl-[10px]" text="Vendas SP" icon={<GridIcon />} />
    <Tab w="w-[43px]" pad="pl-[8px]" text="País" active />
    <Tab w="w-[59px]" pad="pl-[8px]" text="Estado" />
    <Tab w="w-[61px]" pad="pl-[8px]" text="Cidade" />
    <Tab w="w-[88px]" pad="pl-[11px]" text="Painel 3" icon={<GridIcon />} />
    <Tab w="w-[79px]" pad="pl-[8px]" text="Planilha 9" />
    <Tab
      w="w-[36px]"
      pad="pl-[10px]"
      text=""
      icon={
        <Svg w={18} h={18} className="mt-[2px]">
          <path d="M12.400 7V1.600H.6v12.800h7" />
          <path d="M3.500 11V8.500M6 11V5M8.500 9V6.500" strokeWidth="1.300" />
          <path d="M12.500 9v8M8.500 13h8" strokeWidth="1.900" />
        </Svg>
      }
    />
    <Tab
      w="w-[36px]"
      pad="pl-[10px]"
      text=""
      icon={
        <Svg w={18} h={18} className="mt-[2px]">
          <path d="M12.400 7V1.600H.6v11.800h7M6.500 1.600v11.800M.6 7.500h11.800" strokeWidth="1.200" />
          <path d="M12.500 9v8M8.500 13h8" strokeWidth="1.900" />
        </Svg>
      }
    />
    <Tab
      w="w-[36px]"
      pad="pl-[10px]"
      text=""
      icon={
        <Svg w={18} h={18} className="mt-[2px]">
          <path d="M12.400 7V1.600L6.500 4.500.6 1.600v9.800l5.900 2.500V4.500" strokeWidth="1.200" />
          <path d="M12.500 9v8M8.500 13h8" strokeWidth="1.900" />
        </Svg>
      }
    />
  </footer>
);

export default function App() {
  return (
    <div className="flex h-[855px] w-[1919px] flex-col overflow-hidden bg-[#f2f2f2] font-['Roboto','Liberation_Sans',sans-serif] text-[#333]">
      <Header />
      <Toolbar />
      <div className="flex h-[702px] shrink-0">
        <DataPane />
        <Cards />
        <Sheet />
      </div>
      <Tabs />
    </div>
  );
}
